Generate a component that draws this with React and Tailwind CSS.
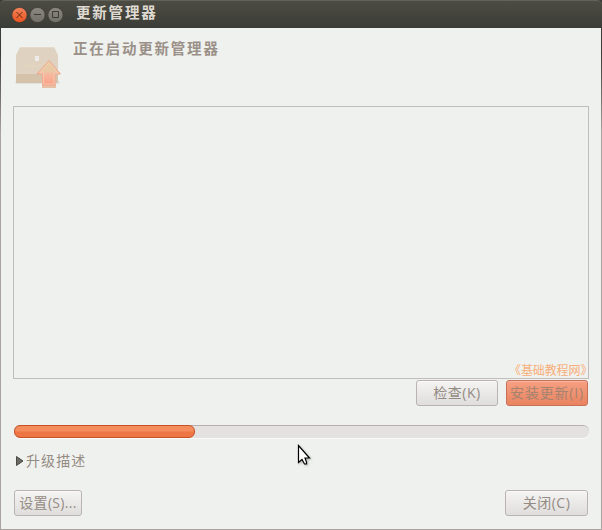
const cjk = 'font-["Open_Sans","Noto_Sans_CJK_SC",sans-serif]';

function WindowButton({ close, children }) {
  return (
    <svg width="16" height="16" viewBox="0 0 16 16" className="block shrink-0">
      <defs>
        <linearGradient id={close ? 'closeFill' : 'plainFill'} x1="0" y1="0" x2="0" y2="1">
          <stop offset="0" stopColor={close ? '#f4845b' : '#8b8980'} />
          <stop offset="1" stopColor={close ? '#e9531f' : '#706f68'} />
        </linearGradient>
      </defs>
      <circle cx="7.5" cy="8" r="7.6" fill={close ? 'url(#closeFill)' : 'url(#plainFill)'} stroke="#3f3a34" strokeWidth="0.7" />
      <g fill="none" stroke={close ? '#6b2c17' : '#3b3a35'} strokeWidth="1">{children}</g>
    </svg>
  );
}

function TitleBar() {
  return (
    <header className="flex h-7 shrink-0 items-center rounded-t-[5px] border-t border-[#62625a] bg-linear-to-b from-[#4d4c43] to-[#3b3c37] pl-3">
      <div className="flex gap-[2px]">
        <WindowButton close><path d="M4.5 5l6 6M10.5 5l-6 6" /></WindowButton>
        <WindowButton><path d="M4 7.5h7" /></WindowButton>
        <WindowButton><path d="M4.5 4.5h6v6h-6z" /></WindowButton>
      </div>
      <h1 className={`${cjk} ml-3 -mt-1 text-[14.5px] leading-5 font-bold tracking-[1.8px] whitespace-nowrap text-[#dfdbd2]`}>更新管理器</h1>
    </header>
  );
}

function UpdateIcon() {
  return (
    <svg width="48" height="46" viewBox="0 0 48 46" className="block shrink-0">
      <defs>
        <linearGradient id="arrowFill" x1="0" y1="0" x2="0" y2="1">
          <stop offset="0" stopColor="#e6cfa6" />
          <stop offset="0.45" stopColor="#ebc7a4" />
          <stop offset="0.55" stopColor="#f5b9a0" />
          <stop offset="1" stopColor="#fba084" />
        </linearGradient>
      </defs>
      <path d="M1.5 39.5h44" stroke="#e0e2de" strokeWidth="3" />
      <path d="M6 4h34l4 8v28H2V12z" fill="#dfd2c0" />
      <path d="M2 31h42v9H2z" fill="#d5c2ab" />
      <path d="M3 24C14 21 25 24 34 18v2C25 26 14 23 3 25z" fill="#e3d4bd" />
      <path d="M6 4.5h34" stroke="#e5d9c9" />
      <path d="M21 13h4v5h-4z" fill="#eeece9" />
      <path d="M28 41h14v4H28z" fill="#e8bfa2" />
      <path d="M35 17.5L46.5 31H41v11H28.5V31H23z" fill="url(#arrowFill)" stroke="#f2a78e" />
      <path d="M35 19.5L44 30h-4v11H29.5V30H26z" fill="none" stroke="#f6cbb5" strokeWidth="0.8" />
    </svg>
  );
}

function Button({ className, children }) {
  return (
    <button className={`${cjk} flex shrink-0 items-center justify-center rounded-[3px] border text-[14px] leading-5 whitespace-nowrap ${className}`}>
      <span>{children}</span>
    </button>
  );
}

const plain = 'border-[#bbb3b1] bg-linear-to-b from-[#f5f4f3] to-[#dfdedd] text-[#948b83] shadow-[inset_0_1px_0_#faf9f8]';

export default function App() {
  return (
    <div className="relative h-[530px] w-[602px] overflow-hidden bg-linear-to-b from-[#3c3b37] from-10% to-[#a9a2a1] to-25%">
      <div className="flex h-full flex-col">
        <TitleBar />
        <main className="mx-px mb-px flex min-h-0 flex-1 flex-col bg-[#eff1ee] px-3">
          <section className="flex h-[78px] shrink-0 pt-[15px] pl-px">
            <UpdateIcon />
            <h2 className={`${cjk} -mt-1 ml-[11px] text-[14.5px] leading-5 font-bold tracking-[1.8px] text-[#9a9088]`}>正在启动更新管理器</h2>
          </section>
          <section className="flex h-[273px] shrink-0 items-end justify-end border border-[#c1bdba]">
            <span className={`${cjk} h-[15px] w-[78px] text-[12px] leading-4 whitespace-nowrap text-[#f8ae78]`}><span className="-ml-px tracking-[-0.1px]">《基础教程网》</span></span>
          </section>
          <div className="mt-px mr-px flex shrink-0 justify-end gap-2">
            <Button className={`h-[26px] w-[82px] pb-px tracking-[0.5px] ${plain}`}>检查(K)</Button>
            <Button className="h-[26px] w-[82px] border-[#c77058] bg-linear-to-b from-[#f6a083] to-[#e9835f] pb-px tracking-[0.8px] text-[#a6836f] shadow-[inset_0_1px_0_#f8b49c]">安装更新(I)</Button>
          </div>
          <div className="mt-[19px] ml-px h-[13px] shrink-0 rounded-[6px] border-t border-[#b9b0ad] bg-[#e3e2e0] shadow-[0_1px_0_#fafaf9]">
            <div className="-mt-px h-[13px] w-[181px] rounded-[6px] border border-[#c65328] bg-linear-to-b from-[#f58c5c] from-45% to-[#ee7544] to-55%" />
          </div>
          <div className="mt-[11px] flex h-6 shrink-0 items-center pl-[3px]">
            <svg width="8" height="10" viewBox="0 0 8 10" className="block"><path d="M.5.5v9L7 5z" fill="#6b6962" stroke="#3f3e39" strokeWidth="0.9" /></svg>
            <span className={`${cjk} ml-[2px] text-[14px] leading-5 tracking-[1.1px] text-[#948b83]`}>升级描述</span>
          </div>
          <footer className="mt-[17px] mr-px ml-px flex shrink-0 justify-between">
            <Button className={`h-[26px] w-[68px] pb-px tracking-[0.3px] ${plain}`}>设置(S)...</Button>
            <Button className={`h-[26px] w-[83px] pb-px tracking-[0.5px] ${plain}`}>关闭(C)</Button>
          </footer>
        </main>
      </div>
      <svg width="15" height="22" viewBox="0 0 15 22" className="absolute top-[444px] left-[297px] drop-shadow-[1px_1px_1px_#0004]">
        <path d="M1.5 1.5v17l3.5-3 2.5 4.5h2V18l-1.5-4h4.5z" fill="#fff" stroke="#000" strokeWidth="1.2" />
      </svg>
    </div>
  );
}
